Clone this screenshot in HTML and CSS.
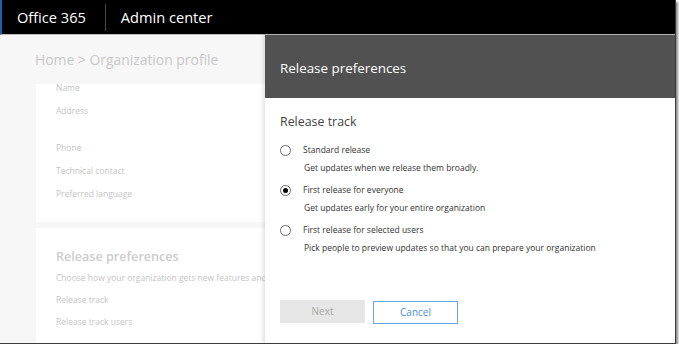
FILE: index.html
```html
<!DOCTYPE html>
<html lang="en">
<head>
    <meta charset="UTF-8">
    <title>Office 365 Admin center</title>
    <link rel="stylesheet" href="styles.css">
</head>
<body>
    <div class="screen">
        <div class="topbar">
            <span class="brand">Office 365</span>
            <span class="sep"></span>
            <span class="app">Admin center</span>
        </div>
        <div class="main">
            <div class="page">
                <div class="crumb">Home &gt; Organization profile</div>
                <div class="card card-profile">
                    <div class="row">Name</div>
                    <div class="row row-gap">Address</div>
                    <div class="row">Phone</div>
                    <div class="row">Technical contact</div>
                    <div class="row">Preferred language</div>
                </div>
                <div class="card card-release">
                    <div class="card-title">Release preferences</div>
                    <div class="row">Choose how your organization gets new features and services</div>
                    <div class="row">Release track</div>
                    <div class="row">Release track users</div>
                </div>
            </div>
            <div class="panel">
                <div class="panel-head">Release preferences</div>
                <div class="panel-body">
                    <div class="panel-title">Release track</div>
                    <div class="option">
                        <div class="opt-line"><i class="radio"></i>Standard release</div>
                        <div class="opt-desc">Get updates when we release them broadly.</div>
                    </div>
                    <div class="option">
                        <div class="opt-line"><i class="radio checked"></i>First release for everyone</div>
                        <div class="opt-desc">Get updates early for your entire organization</div>
                    </div>
                    <div class="option">
                        <div class="opt-line"><i class="radio"></i>First release for selected users</div>
                        <div class="opt-desc">Pick people to preview updates so that you can prepare your organization</div>
                    </div>
                    <div class="actions">
                        <span class="btn btn-next">Next</span>
                        <span class="btn btn-cancel">Cancel</span>
                    </div>
                </div>
            </div>
        </div>
    </div>
</body>
</html>
```

FILE: styles.css
```css
* {
    padding: 0;
    margin: 0;
    box-sizing: border-box;
}
body {
    background-color: #fff;
    font-family: "Open Sans", "Noto Sans", sans-serif;
}
.screen {
    width: 676px;
    height: 344px;
    overflow: hidden;
    border-right: 1px solid #3c3c3c;
    border-bottom: 1px solid #3c3c3c;
    box-shadow: 2px 2px 2px rgba(0, 0, 0, 0.45);
    display: flex;
    flex-direction: column;
    background-color: #f7f7f7;
}
.topbar {
    height: 35px;
    flex: none;
    background-color: #000;
    border-left: 2px solid #1f5fa8;
    border-bottom: 1px solid #bdbdbd;
    display: flex;
    align-items: center;
    color: #fff;
    font-size: 14.6px;
}
.brand {
    margin-left: 15px;
}
.sep {
    width: 1px;
    height: 27px;
    background-color: #4a4a4a;
    margin: 0 15px 0 19px;
}
.main {
    flex: 1;
    display: flex;
    min-height: 0;
}
.page {
    width: 265px;
    flex: none;
    overflow: hidden;
    padding-left: 36px;
    color: #c4c4c4;
    font-size: 8.5px;
}
.crumb {
    font-size: 13.9px;
    line-height: 24px;
    margin: 13px 0 12px -1px;
    white-space: nowrap;
    color: #c8c8c8;
}
.card {
    width: 300px;
    background-color: #fff;
    padding-left: 20px;
    white-space: nowrap;
}
.row {
    line-height: 23px;
}
.card-profile {
    padding-bottom: 17px;
    overflow: hidden;
}
.card-profile .row:first-child {
    margin-top: -8px;
}
.row-gap {
    margin-bottom: 14px;
}
.card-release {
    margin-top: 6px;
    padding-top: 19px;
    height: 200px;
}
.card-release .row {
    line-height: 22px;
}
.card-title {
    font-size: 12.6px;
    font-weight: 600;
    line-height: 20px;
    color: #cccccc;
}
.panel {
    flex: 1;
    background-color: #fff;
    box-shadow: -2px 0 4px rgba(0, 0, 0, 0.12);
    display: flex;
    flex-direction: column;
}
.panel-head {
    height: 63px;
    background-color: #515151;
    color: #fff;
    font-size: 13.4px;
    padding: 2px 0 0 15px;
    display: flex;
    align-items: center;
}
.panel-body {
    padding: 0 15px;
    color: #333;
    font-size: 8.5px;
}
.panel-title {
    font-size: 12.4px;
    line-height: 20px;
    margin: 14px 0 9px;
    color: #444;
}
.option {
    margin-bottom: 4px;
}
.opt-line {
    line-height: 18px;
    display: flex;
    align-items: center;
}
.opt-desc {
    line-height: 18px;
    padding-left: 24px;
}
.radio {
    width: 11px;
    height: 11px;
    border: 1px solid #6a6a6a;
    border-radius: 50%;
    margin-right: 12px;
    display: flex;
    align-items: center;
    justify-content: center;
}
.radio.checked::after {
    content: "";
    width: 5px;
    height: 5px;
    border-radius: 50%;
    background-color: #000;
}
.actions {
    margin-top: 43px;
    display: flex;
    align-items: flex-start;
}
.btn {
    width: 85px;
    height: 23px;
    line-height: 23px;
    text-align: center;
    font-size: 10px;
}
.btn-next {
    background-color: #e6e6e6;
    color: #a6a6a6;
}
.btn-cancel {
    margin: 1px 0 0 8px;
    border: 1px solid #64a6e6;
    line-height: 21px;
    color: #4a90d4;
}
```
